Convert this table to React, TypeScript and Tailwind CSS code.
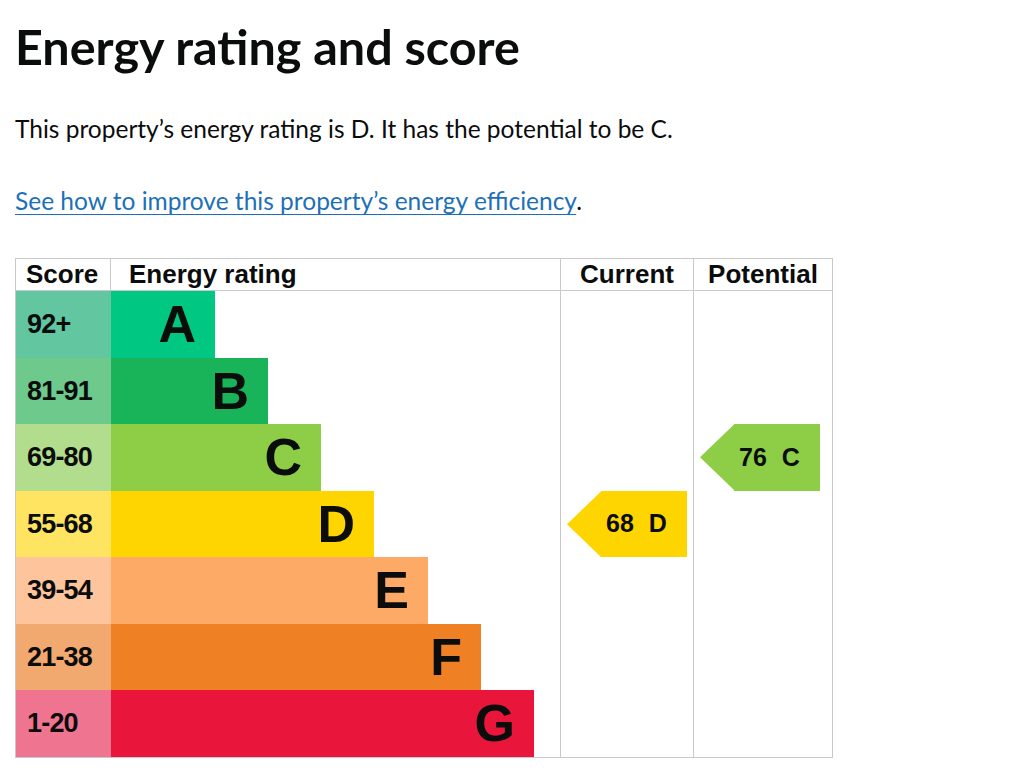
import React from 'react'

interface Band {
  letter: string
  range: string
  bar: string
  cell: string
  width: string
}

const bands: Band[] = [
  { letter: 'A', range: '92+', bar: 'bg-[#00c781]', cell: 'bg-[#62c7a1]', width: 'w-[104px]' },
  { letter: 'B', range: '81-91', bar: 'bg-[#19b459]', cell: 'bg-[#6dca8c]', width: 'w-[157px]' },
  { letter: 'C', range: '69-80', bar: 'bg-[#8dce46]', cell: 'bg-[#b2dd8d]', width: 'w-[210px]' },
  { letter: 'D', range: '55-68', bar: 'bg-[#ffd500]', cell: 'bg-[#ffe462]', width: 'w-[263px]' },
  { letter: 'E', range: '39-54', bar: 'bg-[#fcaa65]', cell: 'bg-[#fec59d]', width: 'w-[317px]' },
  { letter: 'F', range: '21-38', bar: 'bg-[#ef8023]', cell: 'bg-[#f2a970]', width: 'w-[370px]' },
  { letter: 'G', range: '1-20', bar: 'bg-[#e9153b]', cell: 'bg-[#ef7490]', width: 'w-[423px]' },
]

const Tag = ({ score, letter, yellow }: { score: number; letter: string; yellow?: boolean }) => (
  <div className="flex h-full items-center">
    <svg width="34" height="66.5" viewBox="0 0 34 66.5" className="shrink-0">
      <polygon points="34.5,0 34.5,66.5 0,33.25" className={yellow ? 'fill-[#ffd500]' : 'fill-[#8dce46]'} />
    </svg>
    <div
      className={`flex h-full w-[86px] items-center gap-[15px] pl-[5px] text-[25px] font-bold text-[#0b0c0c] ${
        yellow ? 'bg-[#ffd500]' : 'bg-[#8dce46]'
      }`}
    >
      <span>{score}</span>
      <span>{letter}</span>
    </div>
  </div>
)

export default function App() {
  return (
    <div className="min-h-[782px] bg-white px-[15px] pt-[16px] text-[#0b0c0c]">
      <h1 className="font-['Lato',sans-serif] text-[48.5px] font-bold leading-[60px]">
        Energy rating and score
      </h1>
      <p className="mt-[38px] font-['Lato',sans-serif] text-[24.5px] leading-[30px]">
        This property’s energy rating is D. It has the potential to be C.
      </p>
      <p className="mt-[42px] font-['Lato',sans-serif] text-[24.5px] leading-[30px]">
        <a href="#" className="text-[#1d70b8] underline decoration-1 underline-offset-[4px]">
          See how to improve this property’s energy efficiency
        </a>
        .
      </p>

      <div className="mt-[42px] w-[818px] border border-[#c9c9c9] font-['Liberation_Sans',Arial,sans-serif] text-[#0b0c0c]">
        {/* header */}
        <div className="flex h-[32px] items-center border-b border-[#c9c9c9] text-[26px] font-bold">
          <div className="flex h-full w-[95px] items-center border-r border-[#c9c9c9] pl-[10px]">Score</div>
          <div className="flex h-full w-[450px] items-center border-r border-[#c9c9c9] pl-[18px]">Energy rating</div>
          <div className="flex h-full w-[133px] items-center justify-center border-r border-[#c9c9c9]">Current</div>
          <div className="flex h-full flex-1 items-center justify-center">Potential</div>
        </div>

        <div className="flex">
          <div className="w-[545px] border-r border-[#c9c9c9]">
            {bands.map((b) => (
              <div key={b.letter} className="flex h-[66.5px]">
                <div
                  className={`flex w-[95px] items-center pl-[11px] text-[27px] font-bold tracking-[-0.8px] ${b.cell}`}
                >
                  {b.range}
                </div>
                <div
                  className={`flex items-center justify-end pr-[19px] text-[52px] font-bold leading-none ${b.bar} ${b.width}`}
                >
                  {b.letter}
                </div>
              </div>
            ))}
          </div>

          {/* current */}
          <div className="flex w-[133px] flex-col border-r border-[#c9c9c9]">
            <div className="h-[199.5px]" />
            <div className="h-[66.5px] pl-[6px]">
              <Tag score={68} letter="D" yellow />
            </div>
          </div>

          {/* potential */}
          <div className="flex flex-1 flex-col">
            <div className="h-[133px]" />
            <div className="h-[66.5px] pl-[6px]">
              <Tag score={76} letter="C" />
            </div>
          </div>
        </div>
      </div>
    </div>
  )
}
